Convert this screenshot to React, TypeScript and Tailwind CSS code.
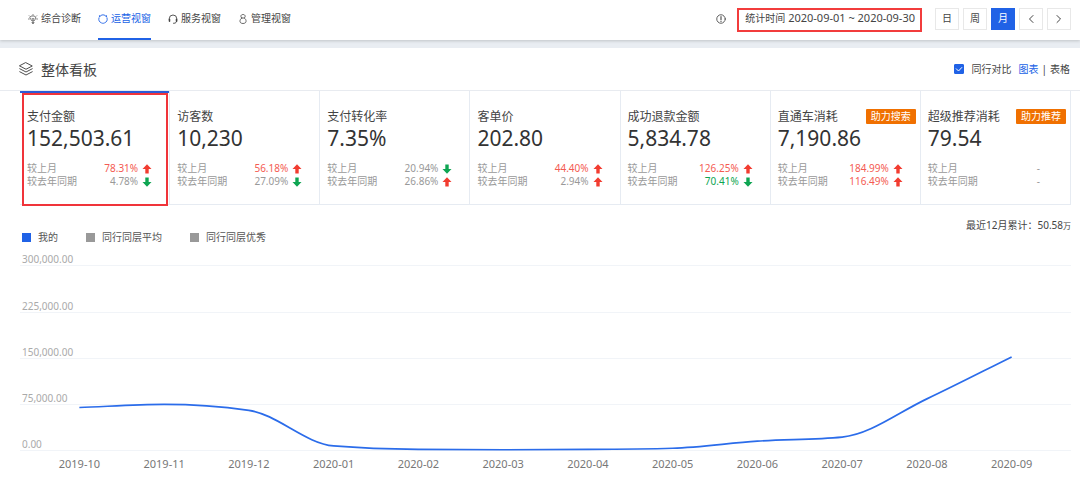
import React, { useId, useState } from "react";

type Trend = { value: string; dir?: "up" | "down"; tone?: "red" | "green" | "gray" };
type Metric = { name: string; value: string; badge?: string; month: Trend; year: Trend };

const METRICS: Metric[] = [
  { name: "支付金额", value: "152,503.61", month: { value: "78.31%", dir: "up", tone: "red" }, year: { value: "4.78%", dir: "down" } },
  { name: "访客数", value: "10,230", month: { value: "56.18%", dir: "up", tone: "red" }, year: { value: "27.09%", dir: "down" } },
  { name: "支付转化率", value: "7.35%", month: { value: "20.94%", dir: "down" }, year: { value: "26.86%", dir: "up" } },
  { name: "客单价", value: "202.80", month: { value: "44.40%", dir: "up", tone: "red" }, year: { value: "2.94%", dir: "up" } },
  { name: "成功退款金额", value: "5,834.78", month: { value: "126.25%", dir: "up", tone: "red" }, year: { value: "70.41%", dir: "down", tone: "green" } },
  { name: "直通车消耗", value: "7,190.86", badge: "助力搜索", month: { value: "184.99%", dir: "up", tone: "red" }, year: { value: "116.49%", dir: "up", tone: "red" } },
  { name: "超级推荐消耗", value: "79.54", badge: "助力推荐", month: { value: "-" }, year: { value: "-" } },
];

const POINTS: { month: string; amount: number }[] = [
  { month: "2019-10", amount: 70500 },
  { month: "2019-11", amount: 75500 },
  { month: "2019-12", amount: 66000 },
  { month: "2020-01", amount: 8200 },
  { month: "2020-02", amount: 2600 },
  { month: "2020-03", amount: 2000 },
  { month: "2020-04", amount: 2500 },
  { month: "2020-05", amount: 4500 },
  { month: "2020-06", amount: 16000 },
  { month: "2020-07", amount: 22500 },
  { month: "2020-08", amount: 84500 },
  { month: "2020-09", amount: 152503 },
];

const TICKS = [
  { label: "300,000.00", height: "h-4" },
  { label: "225,000.00", height: "h-[47px]" },
  { label: "150,000.00", height: "h-[46px]" },
  { label: "75,000.00", height: "h-[46px]" },
  { label: "0.00", height: "h-[46px]" },
];
const MAX = 300000;
const PLOT_W = 1200;
const PLOT_H = 185;

/** Monotone cubic through the points, so the line never overshoots its data. */
function linePath(values: number[]): string {
  const h = PLOT_W / values.length;
  const pts = values.map((v, i) => [h * (i + 0.5), PLOT_H * (1 - v / MAX)]);
  const n = pts.length;
  const d = pts.slice(1).map((p, i) => (p[1] - pts[i][1]) / h);
  const m = pts.map((_, i) => {
    if (i === 0) return d[0];
    if (i === n - 1) return d[n - 2];
    const a = d[i - 1];
    const b = d[i];
    if (a * b <= 0) return 0;
    return Math.sign(a) * Math.min(Math.abs(a) * 2, Math.abs(b) * 2, Math.abs(a + b) / 2);
  });
  return pts.reduce((s, p, i) => {
    if (i === 0) return `M${p[0]},${p[1]}`;
    const q = pts[i - 1];
    return `${s}C${q[0] + h / 3},${q[1] + (m[i - 1] * h) / 3} ${p[0] - h / 3},${p[1] - (m[i] * h) / 3} ${p[0]},${p[1]}`;
  }, "");
}

const stroke = { fill: "none", stroke: "currentColor", strokeLinecap: "round", strokeLinejoin: "round" } as const;

function DiagnoseIcon() {
  return (
    <svg viewBox="0 0 20 20" className="size-[10px]" {...stroke} strokeWidth="1.4" aria-hidden="true">
      <path d="M7 4h6l3 4-4 6H8L4 8z" />
      <path d="M8 8.5l2 2 2-2M10 10.5V14M8 17h4M9 19h2M10 1v1M2.5 3.5l1 1M17.5 3.5l-1 1M1 10h1.5M17.5 10H19" />
    </svg>
  );
}

function OperateIcon() {
  return (
    <svg viewBox="0 0 20 20" className="size-[10px]" {...stroke} strokeWidth="1.8" aria-hidden="true">
      <path d="M6 2.500a8.500 8.500 0 0 1 8 0M18 7.500a8.500 8.500 0 0 1-5 10.500M7 18A8.500 8.500 0 0 1 2 7.500" />
      <g fill="currentColor" stroke="none">
        <circle cx="3.500" cy="4.200" r="1.800" />
        <circle cx="16.500" cy="4.200" r="1.800" />
        <circle cx="10" cy="18.300" r="1.500" />
      </g>
    </svg>
  );
}

function ServiceIcon() {
  return (
    <svg viewBox="0 0 20 20" className="size-[10px]" {...stroke} strokeWidth="1.800" aria-hidden="true">
      <path d="M2.500 12V9.500a7.500 7.500 0 0 1 15 0V13c0 3-2 5.500-5.500 5.500h-1" />
      <path d="M3 10.500v4M17 10.500v4" strokeWidth="3" />
    </svg>
  );
}

function ManageIcon() {
  return (
    <svg viewBox="0 0 20 20" className="size-[10px]" {...stroke} strokeWidth="1.600" aria-hidden="true">
      <path d="M7.500 8C4.500 6 5 1 10 1s5.500 5 2.500 7c5 3 5.500 11-2.500 11S2.500 11 7.500 8z" />
      <path d="M7.500 8h5" />
    </svg>
  );
}

function LayersIcon() {
  return (
    <svg viewBox="0 0 28 28" className="size-[14px]" {...stroke} strokeWidth="1.900" aria-hidden="true">
      <path d="M14 1.500L26.500 8 14 14.500 1.500 8z" />
      <path d="M1.500 13.500L14 20l12.500-6.500M1.500 19.500L14 26l12.500-6.500" />
    </svg>
  );
}

function InfoIcon() {
  return (
    <svg viewBox="0 0 20 20" className="size-[10px] text-[#444]" {...stroke} strokeWidth="1.700" aria-hidden="true">
      <circle cx="10" cy="10" r="8.500" />
      <path d="M10 5v6.500M10 14.500v.5" strokeWidth="2.200" />
    </svg>
  );
}

function Chevron({ left = false }: { left?: boolean }) {
  return (
    <svg viewBox="0 0 10 10" className="size-[10px]" {...stroke} aria-hidden="true">
      <path d={left ? "M7 1.500L3.500 5 7 8.500" : "M3 1.500L6.500 5 3 8.500"} />
    </svg>
  );
}

function Arrow({ dir }: { dir: "up" | "down" }) {
  return (
    <svg viewBox="0 0 10 10" className={dir === "up" ? "size-[10px] text-[#f23c30]" : "size-[10px] text-[#0ea552]"} aria-hidden="true">
      <path fill="currentColor" d={dir === "up" ? "M5 .3L9.500 5H6.700v4.500H3.300V5H.5z" : "M5 9.700L9.500 5H6.700V.5H3.300V5H.5z"} />
    </svg>
  );
}

const TONES = { red: "text-[#f45b52]", green: "text-[#0ea552]", gray: "text-[#999]" };

function TrendRow({ label, trend }: { label: string; trend: Trend }) {
  return (
    <span className="flex items-center text-[10px] leading-[13px] text-[#999]">
      <span>{label}</span>
      <span className={`ml-auto ${TONES[trend.tone ?? "gray"]}`}>{trend.value}</span>
      {trend.dir ? (
        <span className="ml-1">
          <Arrow dir={trend.dir} />
        </span>
      ) : (
        <span className="w-[13px]" />
      )}
    </span>
  );
}

function MetricCard({ metric, active, onSelect }: { metric: Metric; active: boolean; onSelect: () => void }) {
  return (
    <button
      type="button"
      onClick={onSelect}
      aria-pressed={active}
      className="relative flex min-w-0 flex-1 flex-col border-r border-[#e6ebf2] pt-[18px] pr-[17px] pb-4 pl-[7px] text-left"
    >
      {active && (
        <>
          <span className="absolute inset-x-0 top-0 h-[2px] bg-[#2a5bd7]" />
          <span className="absolute top-[2px] right-px -bottom-[2px] left-[2px] border-2 border-[#f0343a]" />
        </>
      )}
      <span className="block text-[12px] leading-4 whitespace-nowrap text-[#444]">{metric.name}</span>
      <span className="block text-[21px] leading-[26px] text-[#333]">{metric.value}</span>
      <span className="mt-[11px] flex w-full flex-col">
        <TrendRow label="较上月" trend={metric.month} />
        <TrendRow label="较去年同期" trend={metric.year} />
      </span>
      {metric.badge && (
        <span className="absolute top-[18px] right-1 rounded-[1px] bg-[#f07000] px-[5px] text-[10px] leading-[15px] text-white">
          {metric.badge}
        </span>
      )}
    </button>
  );
}

const TABS = [
  { name: "综合诊断", icon: <DiagnoseIcon /> },
  { name: "运营视窗", icon: <OperateIcon /> },
  { name: "服务视窗", icon: <ServiceIcon /> },
  { name: "管理视窗", icon: <ManageIcon /> },
];

function Header() {
  const [period, setPeriod] = useState("月");
  const box = "flex h-[22px] w-6 items-center justify-center border text-[10px]";
  return (
    <header className="relative flex h-10 items-stretch bg-white pr-[9px] pl-7 shadow-[0_1px_3px_rgba(0,0,0,0.18)]">
      <nav className="flex gap-[17px]">
        {TABS.map((t, i) => (
          <a
            key={t.name}
            href="#"
            aria-current={i === 1 ? "page" : undefined}
            className={`flex items-center gap-[3px] border-b-2 pt-px pb-[2px] text-[10px] ${
              i === 1 ? "border-[#2062e6] text-[#2062e6]" : "border-transparent text-[#444]"
            }`}
          >
            {t.icon}
            {t.name}
          </a>
        ))}
      </nav>
      <div className="ml-auto flex items-center pb-[3px]">
        <InfoIcon />
        <div className="mt-[2px] ml-[11px] flex h-6 items-center gap-[3px] border-2 border-[#f23c3c] pr-[5px] pb-[2px] pl-[6px] text-[#444]">
          <span className="text-[10px]">统计时间</span>
          <span className="text-[11px]">2020-09-01 ~ 2020-09-30</span>
        </div>
        <div className="ml-[13px] flex gap-1">
          {["日", "周", "月"].map((p) => (
            <button
              key={p}
              type="button"
              aria-pressed={p === period}
              onClick={() => setPeriod(p)}
              className={`${box} ${p === period ? "border-[#2062e6] bg-[#2062e6] text-white" : "border-[#e8e8e8] text-[#444]"}`}
            >
              {p}
            </button>
          ))}
          <button type="button" aria-label="上一月" className={`${box} border-[#e8e8e8] text-[#444]`}>
            <Chevron left />
          </button>
          <button type="button" aria-label="下一月" className={`${box} border-[#e8e8e8] text-[#444]`}>
            <Chevron />
          </button>
        </div>
      </div>
    </header>
  );
}

function TrendChart() {
  return (
    <div className="mt-[5px]">
      <div className="relative">
        {TICKS.map((t) => (
          <div key={t.label} className={`flex items-end border-b border-[#f1f4f8] pl-[2px] text-[10px] leading-3 text-[#aaa] ${t.height}`}>
            {t.label}
          </div>
        ))}
        <div className="absolute inset-x-[17px] bottom-0 h-[185px]">
          <svg viewBox={`0 0 ${PLOT_W} ${PLOT_H}`} preserveAspectRatio="none" className="size-full" role="img" aria-label="支付金额">
            <path d={linePath(POINTS.map((p) => p.amount))} fill="none" stroke="#2b6cea" strokeWidth="1.700" vectorEffect="non-scaling-stroke" />
          </svg>
        </div>
      </div>
      <div className="mt-[5px] grid grid-cols-12 px-[17px] text-center text-[11px] leading-4 text-[#777]">
        {POINTS.map((p) => (
          <span key={p.month}>{p.month}</span>
        ))}
      </div>
    </div>
  );
}

export default function App() {
  const compareId = useId();
  const [active, setActive] = useState(0);
  return (
    <div className="min-h-screen bg-white font-['Noto_Sans','Noto_Sans_CJK_SC',sans-serif]">
      <Header />
      <div className="h-2 bg-[#e9edf2]" />
      <main>
        <div className="flex h-[43px] items-center border-b border-[#e8ebf0] pr-[10px] pl-[19px] text-[#444]">
          <LayersIcon />
          <h1 className="ml-2 text-[14px]">整体看板</h1>
          <div className="ml-auto flex items-center text-[10px]">
            <input
              id={compareId}
              type="checkbox"
              defaultChecked
              className="size-[10px] appearance-none rounded-[1px] border border-[#2062e6] checked:bg-[#2062e6]"
            />
            <svg viewBox="0 0 10 10" className="pointer-events-none -ml-[10px] size-[10px] text-white" {...stroke} aria-hidden="true">
              <path d="M2.300 4.800L4.500 7 7.800 3.500" />
            </svg>
            <label htmlFor={compareId} className="ml-[7px]">
              同行对比
            </label>
            <a href="#" className="ml-[7px] text-[#2062e6]">
              图表
            </a>
            <span className="mx-[3px]">|</span>
            <a href="#">表格</a>
          </div>
        </div>
        <div className="pr-[9px] pl-5">
          <section className="flex border-b border-[#e6ebf2]">
            {METRICS.map((m, i) => (
              <MetricCard key={m.name} metric={m} active={i === active} onSelect={() => setActive(i)} />
            ))}
          </section>
          <p className="mt-3 text-right text-[10px] leading-4 text-[#444]">
            最近12月累计：50.58<span className="text-[8px]">万</span>
          </p>
          <ul className="-mt-[5px] flex gap-7 pl-[2px] text-[10px] leading-4 text-[#555]">
            {["我的", "同行同层平均", "同行同层优秀"].map((name, i) => (
              <li key={name} className="flex items-center gap-[7px]">
                <span className={`size-[9px] ${i === 0 ? "bg-[#2062e6]" : "bg-[#999]"}`} />
                {name}
              </li>
            ))}
          </ul>
          <TrendChart />
        </div>
      </main>
    </div>
  );
}
